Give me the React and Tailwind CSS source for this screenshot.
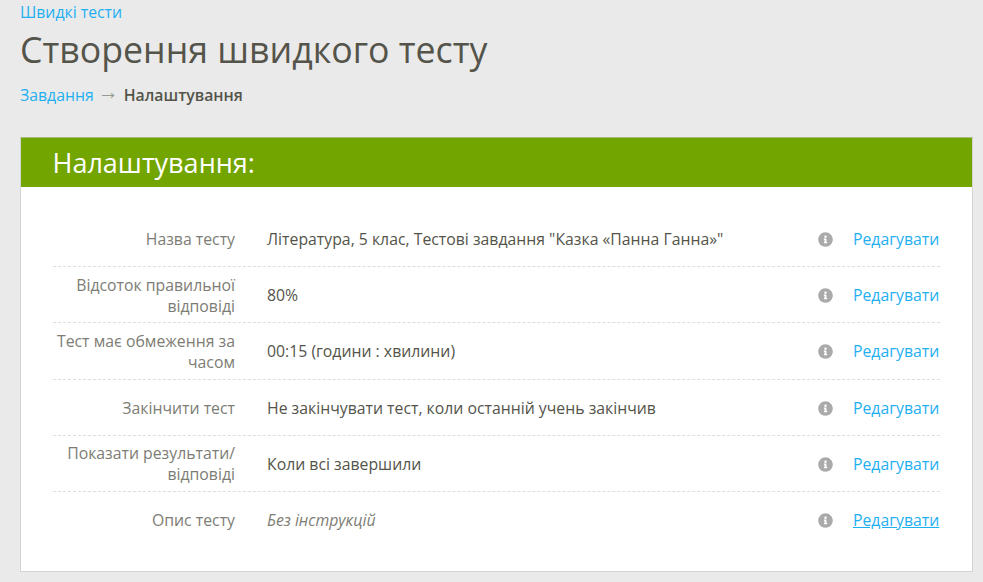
const rows = [
  { label: 'Назва тесту', value: 'Література, 5 клас, Тестові завдання "Казка «Панна Ганна»"' },
  { label: 'Відсоток правильної відповіді', value: '80%' },
  { label: 'Тест має обмеження за часом', value: '00:15 (години : хвилини)' },
  { label: 'Закінчити тест', value: 'Не закінчувати тест, коли останній учень закінчив' },
  { label: 'Показати результати/ відповіді', value: 'Коли всі завершили' },
  { label: 'Опис тесту', value: 'Без інструкцій', empty: true, hover: true },
]

function InfoIcon() {
  return (
    <svg viewBox="0 0 512 512" className="h-[15px] w-[15px] fill-[#aaaaaa]">
      <path d="M256 8C119 8 8 119 8 256s111 248 248 248 248-111 248-248S393 8 256 8zm0 110c23.200 0 42 18.800 42 42s-18.800 42-42 42-42-18.800-42-42 18.800-42 42-42zm56 254c0 6.600-5.400 12-12 12h-88c-6.600 0-12-5.400-12-12v-24c0-6.600 5.400-12 12-12h12v-64h-12c-6.600 0-12-5.400-12-12v-24c0-6.600 5.400-12 12-12h64c6.600 0 12 5.400 12 12v100h12c6.600 0 12 5.400 12 12v24z" />
    </svg>
  )
}

function Row({ row, last }) {
  return (
    <div className={`flex h-[56.2px] items-center ${last ? '' : 'border-b border-dashed border-[#dddddd] pt-[2px]'}`}>
      <div className="w-[182px] shrink-0 text-right text-[15.8px] leading-[21px] text-[#7d7d75]">{row.label}</div>
      <div className={`ml-8 flex-1 text-[15.8px] leading-[21px] ${row.empty ? 'italic text-[#7d7d75]' : 'text-[#54544a]'}`}>
        {row.value}
      </div>
      <InfoIcon />
      <a href="#" className={`ml-[20px] w-[87px] whitespace-nowrap text-[15.8px] leading-[21px] text-[#1fb0f2] ${row.hover ? 'underline' : ''}`}>
        Редагувати
      </a>
    </div>
  )
}

export default function App() {
  return (
    <div className="h-[582px] overflow-hidden bg-[#eaeaea] px-5 font-['Open_Sans',sans-serif]">
      <a href="#" className="block pt-[2px] text-[15.8px] leading-[20px] text-[#1fb0f2]">Швидкі тести</a>
      <h1 className="mt-[3px] text-[35.7px] leading-[48px] text-[#54544a]">Створення швидкого тесту</h1>
      <div className="mt-[12px] flex items-center text-[15.8px] leading-[20px]">
        <a href="#" className="text-[#1fb0f2]">Завдання</a>
        <span className="ml-[4px] mb-[6px] h-[14px] font-['Liberation_Sans',sans-serif] text-[21px] leading-[14px] text-[#9a9a94]">→</span>
        <span className="ml-[5px] font-semibold text-[#54544a]">Налаштування</span>
      </div>
      <div className="mt-[32px] w-[953px] border border-[#d4d4d4] border-t-[#a8bc80] bg-white">
        <div className="flex h-[49px] items-center bg-[#72a500] pt-[2px] pl-[31.5px] text-[27px] text-white">Налаштування:</div>
        <div className="px-8 pt-[24px] pb-[23px]">
          {rows.map((row, i) => (
            <Row key={row.label} row={row} last={i === rows.length - 1} />
          ))}
        </div>
      </div>
    </div>
  )
}
